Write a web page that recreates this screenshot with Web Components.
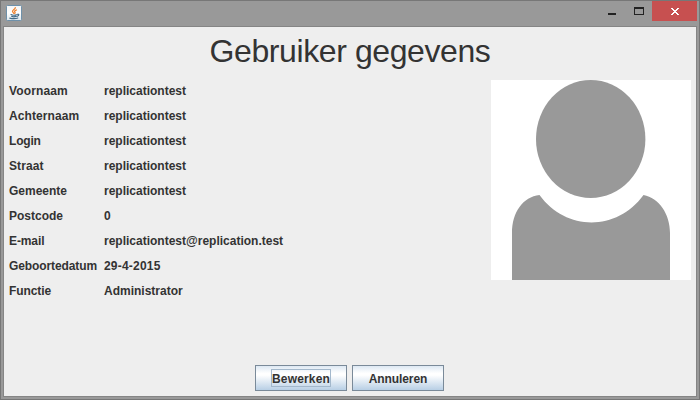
<!DOCTYPE html>
<html lang="nl"><head><meta charset="utf-8"><title>Gebruiker gegevens</title>
<style>html,body{margin:0;width:700px;height:400px;overflow:hidden}body{font:bold 12px "Liberation Sans",Arial,sans-serif;color:#333}</style></head>
<body>
<app-window>
  <title-bar slot="title"></title-bar>
  <page-heading>Gebruiker gegevens</page-heading>
  <user-details>
    <detail-row label="Voornaam" style="--label-track:.14px">replicationtest</detail-row>
    <detail-row label="Achternaam" style="--label-track:.08px">replicationtest</detail-row>
    <detail-row label="Login" style="--label-track:-.2px">replicationtest</detail-row>
    <detail-row label="Straat" style="--label-track:.1px">replicationtest</detail-row>
    <detail-row label="Gemeente">replicationtest</detail-row>
    <detail-row label="Postcode">0</detail-row>
    <detail-row label="E-mail" style="--label-track:-.1px">replicationtest@replication.test</detail-row>
    <detail-row label="Geboortedatum" style="--label-track:-.1px;--value-track:.2px">29-4-2015</detail-row>
    <detail-row label="Functie" style="--label-track:-.1px">Administrator</detail-row>
    <user-avatar slot="picture"></user-avatar>
  </user-details>
  <button-bar><metal-button focused style="letter-spacing:.15px">Bewerken</metal-button><metal-button style="letter-spacing:-.1px">Annuleren</metal-button></button-bar>
</app-window>
<script>
function define(name, html) {
  customElements.define(name, class extends HTMLElement {
    constructor() {
      super();
      this.attachShadow({mode: 'open'}).innerHTML = html;
    }
    connectedCallback() {
      const label = this.shadowRoot.querySelector('.label');
      if (label) label.textContent = this.getAttribute('label');
    }
  });
}
define('app-window', `<style>
:host{display:flex;flex-direction:column;box-sizing:border-box;width:700px;height:400px;background:#999;border:1px solid #777;padding:0 2px 2px}
main{flex:1;box-sizing:border-box;display:flex;flex-direction:column;background:#eee;border:1px solid #858585}
</style><slot name="title"></slot><main><slot></slot></main>`);
define('title-bar', `<style>
:host{display:flex;height:25px;justify-content:space-between;align-items:flex-start}
svg{display:block}.app{margin:4px 0 0 3px}.controls{display:flex}.close{background:#c75050}
</style>
<svg class="app" width="16" height="16" viewBox="0 0 16 16">
<defs><linearGradient id="g" x2="0" y2="1"><stop stop-color="#f5f5f5"/><stop offset=".5" stop-color="#fff"/><stop offset="1" stop-color="#dce7ee"/></linearGradient></defs>
<rect x=".5" y=".5" width="15" height="15" rx="1" fill="url(#g)" stroke="#6f91aa"/>
<g fill="none" stroke-linecap="round"><path d="M9.3 2.6C9.5 4 6.2 5 6.5 6.5c.2.8 1.1 1.1 1.1 1.8M10.5 5C8.8 5.6 8.2 6.2 8.8 7c.5.6.4 1-.1 1.4" stroke="#ef812b" stroke-width="1.25"/>
<path d="M5 9.6c1.4.7 4.4.6 5.5.2M5.6 11.3c1.2.6 3.2.6 4.5.1M3.8 13.1c2.7.7 6.2.6 8-.1M11.5 9.3c1.8-.5 1.9 1.2-.3 2" stroke="#456b87" stroke-width="1.15"/></g></svg>
<div class="controls"><svg width="52" height="19" viewBox="0 0 52 19" shape-rendering="crispEdges"><path d="M8 12h8v2H8zM34 6h10v8H34zM35 8v5h8V8z" fill="#222" fill-rule="evenodd"/></svg>
<svg class="close" width="45" height="20" viewBox="0 0 45 20"><path d="M19 7h2v1h1v1h2V8h1V7h2v1h-1v1h-1v1h-1v1h1v1h1v1h1v1h-2v-1h-1v-1h-2v1h-1v1h-2v-1h1v-1h1v-1h1v-1h-1V9h-1V8h-1z" fill="#fff" shape-rendering="crispEdges"/></svg></div>`);
define('page-heading', `<style>:host{display:block;height:48px;text-align:center;font:32px/48px "Liberation Sans",Arial,sans-serif;letter-spacing:-.4px}</style><slot></slot>`);
define('user-details', `<style>:host{display:flex;flex:1;justify-content:space-between;padding:5px 5px 0 5px}.rows{margin-top:-1px}</style><div class="rows"><slot></slot></div><slot name="picture"></slot>`);
define('detail-row', `<style>:host{display:grid;grid-template-columns:95px auto;height:25px;line-height:25px;white-space:nowrap}.label{letter-spacing:var(--label-track,0)}.value{letter-spacing:var(--value-track,0)}</style><span class="label"></span><span class="value"><slot></slot></span>`);
define('user-avatar', `<style>:host{display:block;width:200px;height:200px;background:#fff}svg{display:block}</style>
<svg width="200" height="200" viewBox="0 0 200 200" fill="#999"><ellipse cx="99.7" cy="59" rx="54.7" ry="59"/><path d="M21 200V153C21 132 32 117 48.5 115C75 151.5 126 151.5 152.5 115C168 118 179 134 179 153V200Z"/></svg>`);
define('button-bar', `<style>:host{display:flex;justify-content:center;gap:5px;padding:0 1px 5px 0}</style><slot></slot>`);
define('metal-button', `<style>
:host{display:flex;box-sizing:border-box;width:92px;height:26px;align-items:center;justify-content:center;border:1px solid #7a8a99;background:linear-gradient(#dde8f3 0,#fff 30%,#fff 38%,#b8cfe5 100%)}
span{box-sizing:border-box;height:18px;line-height:20px;padding:0 1px;white-space:nowrap}
:host([focused]) span{box-shadow:inset 0 0 0 1px #a3b8cc}
</style><span><slot></slot></span>`);
</script></body></html>
